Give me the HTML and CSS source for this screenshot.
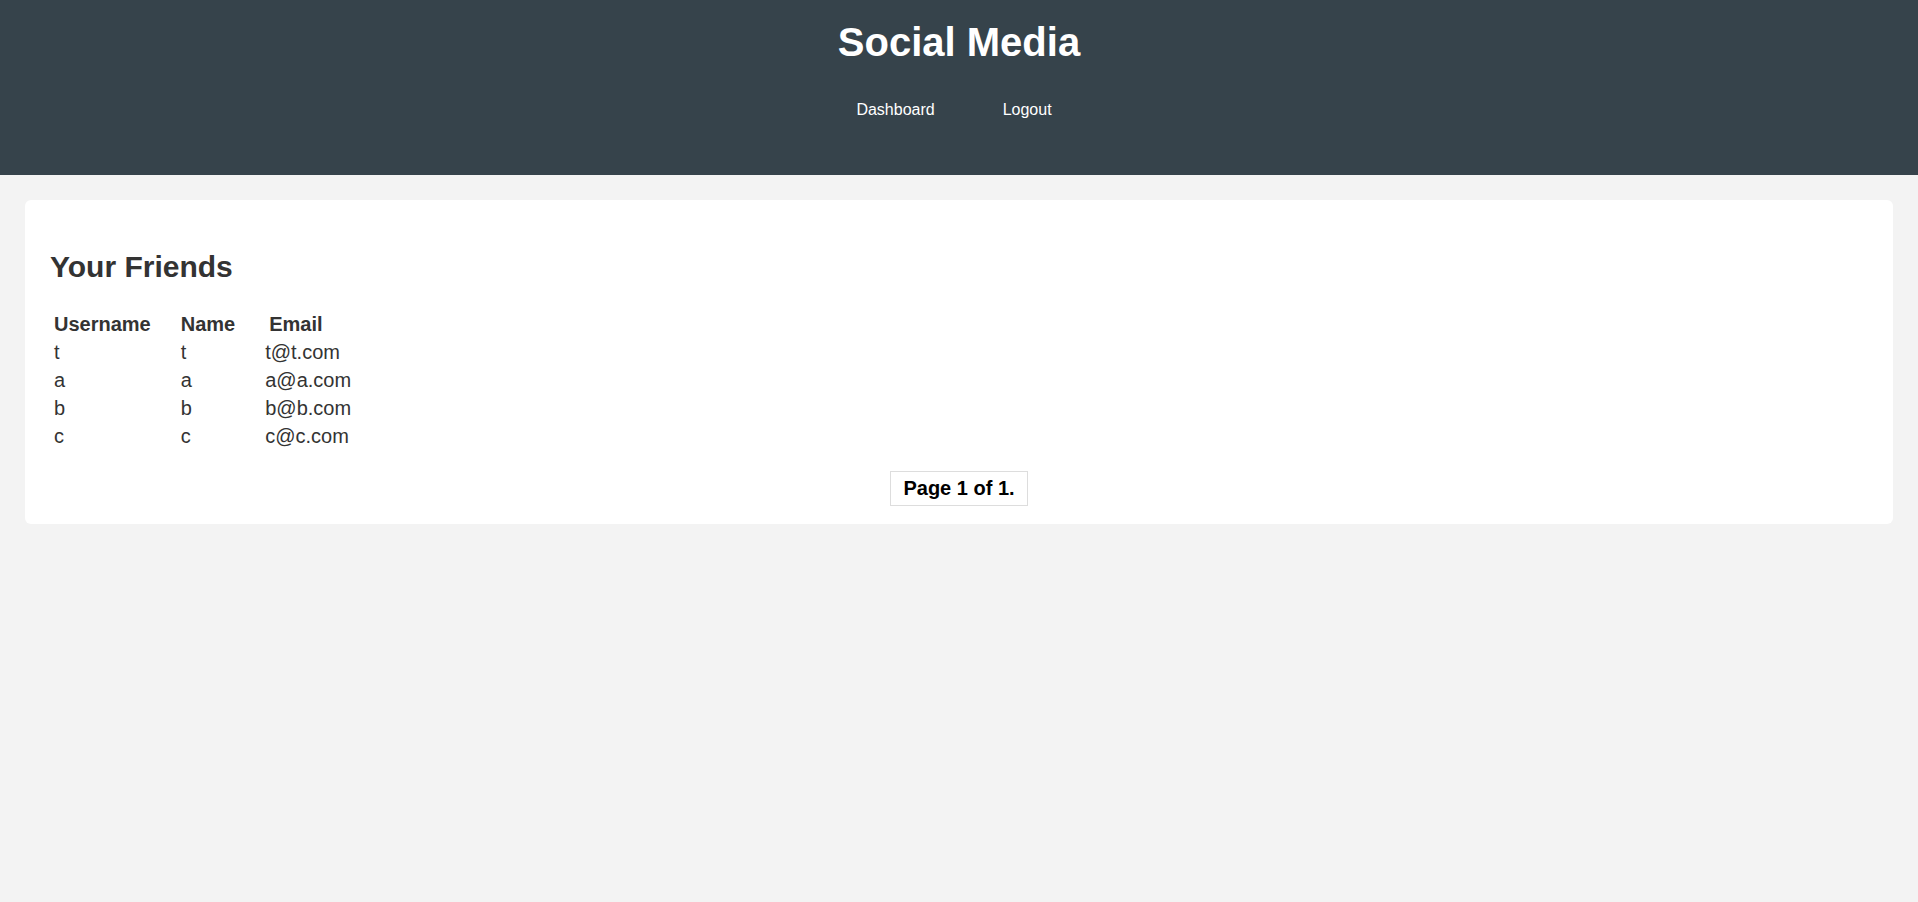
FILE: index.html
```html
<!DOCTYPE html>
<html lang="en">
<head>
<meta charset="utf-8">
<title>Social Media</title>
<link rel="stylesheet" href="styles.css">
</head>
<body>
<header class="site-header">
  <h1 class="site-title">Social Media</h1>
  <nav class="site-nav">
    <a class="nav-link" href="#">Dashboard</a>
    <a class="nav-link" href="#">Logout</a>
  </nav>
</header>
<main class="main">
  <section class="card">
    <h2 class="card-title">Your Friends</h2>
    <table class="friends">
      <thead>
        <tr><th>Username</th><th>Name</th><th class="th-email">Email</th></tr>
      </thead>
      <tbody>
        <tr><td>t</td><td>t</td><td>t@t.com</td></tr>
        <tr><td>a</td><td>a</td><td>a@a.com</td></tr>
        <tr><td>b</td><td>b</td><td>b@b.com</td></tr>
        <tr><td>c</td><td>c</td><td>c@c.com</td></tr>
      </tbody>
    </table>
    <div class="pager">
      <span class="pager-box">Page 1 of 1.</span>
    </div>
  </section>
</main>
</body>
</html>
```

FILE: styles.css
```css
html, body {
  margin: 0;
  padding: 0;
}
body {
  background: #f3f3f3;
  font-family: "Liberation Sans", Arial, sans-serif;
  color: #333;
}
.site-header {
  background: #36434b;
  color: #fff;
  height: 175px;
  box-sizing: border-box;
  padding-top: 19px;
  text-align: center;
}
.site-title {
  margin: 0;
  font-size: 40px;
  line-height: 46px;
  font-weight: bold;
}
.site-nav {
  display: flex;
  justify-content: center;
  gap: 68px;
  margin-top: 36px;
  padding-right: 10px;
}
.nav-link {
  color: #fff;
  text-decoration: none;
  font-size: 16px;
  line-height: 18px;
}
.main {
  padding: 25px;
}
.card {
  background: #fff;
  border-radius: 6px;
  padding: 24px 25px 18px;
}
.card-title {
  margin: 25px 0 25px;
  font-size: 30px;
  line-height: 36px;
  font-weight: bold;
  color: #333;
}
.friends {
  border-collapse: collapse;
  font-size: 20px;
  line-height: 28px;
}
.friends th,
.friends td {
  padding: 0 26px 0 4px;
  text-align: left;
  white-space: nowrap;
}
.friends th {
  font-weight: bold;
}
.friends .th-email {
  padding-left: 8px;
}
.pager {
  display: flex;
  justify-content: center;
  margin-top: 21px;
}
.pager-box {
  border: 1px solid #ddd;
  padding: 5px 12px 6px;
  font-size: 20px;
  line-height: 22px;
  font-weight: bold;
  color: #000;
}
```
